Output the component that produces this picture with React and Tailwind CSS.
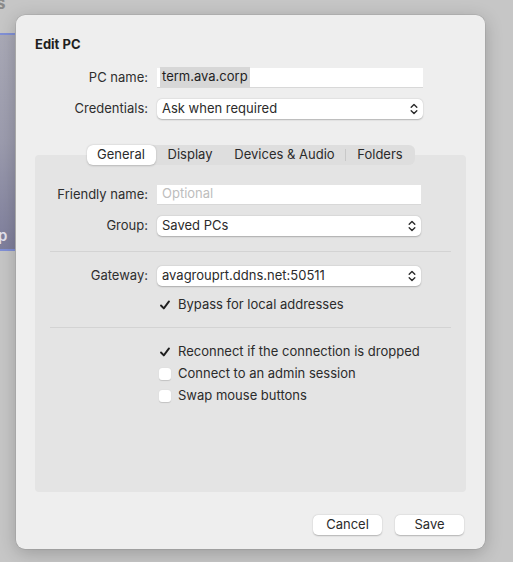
const font = { fontFamily: "Inter, 'Liberation Sans', sans-serif" };

const Chevrons = () => (
  <svg width="8" height="12" viewBox="0 0 8 12" fill="none" stroke="#2b2b2b" strokeWidth="1.4" strokeLinecap="round" strokeLinejoin="round">
    <path d="M1.2 4.2 L4 1.4 L6.8 4.2" />
    <path d="M1.2 7.8 L4 10.6 L6.8 7.8" />
  </svg>
);

const Check = () => (
  <svg width="12" height="12" viewBox="0 0 12 12" fill="none" stroke="#1f1f1f" strokeWidth="1.9" strokeLinecap="round" strokeLinejoin="round">
    <path d="M2 6.5 L4.8 9.4 L10 2.4" />
  </svg>
);

const Label = ({ children, w = "w-[113px]" }) => (
  <div className={`${w} shrink-0 text-right text-[13px] text-[#2e2e2e]`}>{children}</div>
);

const Select = ({ value, w }) => (
  <div className={`${w} h-[20px] bg-white rounded-[5px] shadow-[0_0.5px_1.5px_rgba(0,0,0,0.25)] flex items-center justify-between pl-[5px] pr-[5px] text-[13px] text-[#2b2b2b]`}>
    <span>{value}</span>
    <Chevrons />
  </div>
);

const CheckRow = ({ checked, label }) => (
  <div className="flex items-center gap-[7px] h-[22px]">
    <div className="w-[13px] h-[13px] flex items-center justify-center">
      {checked ? <Check /> : <div className="w-[12px] h-[12px] bg-white rounded-[3px] shadow-[0_0.5px_1px_rgba(0,0,0,0.15)]" />}
    </div>
    <span className="text-[13px] text-[#2b2b2b]">{label}</span>
  </div>
);

const tabs = ["General", "Display", "Devices & Audio", "Folders"];
const tabWidths = ["w-[69px]", "w-[69px]", "w-[120px]", "w-[69px]"];

export default function App() {
  return (
    <div style={font} className="relative w-[513px] h-[562px] overflow-hidden bg-[#c6c6c6]">
      {/* window behind the dialog */}
      <div className="absolute left-[-4px] top-[-9px] text-[17px] font-bold text-[#8a8a8a]">s</div>
      <div className="absolute left-0 top-[33px] w-[15px] h-[218px] border-y-2 border-[#8190d6] bg-gradient-to-b from-[#a9a9b6] via-[#9c9cae] to-[#7f7f9c]">
        <span className="absolute left-[-2px] top-[190px] text-[15px] font-semibold text-[#e4e4ee]">p</span>
      </div>

      <div className="relative ml-[16px] mt-[15px] w-[469px] h-[534px] bg-[#eeeeee] rounded-[9px] shadow-[0_4px_18px_rgba(0,0,0,0.22),0_0_0_0.5px_rgba(0,0,0,0.12)] flex flex-col">
        <div className="pl-[19px] pt-[20px] text-[13px] font-bold text-[#1f1f1f]">Edit PC</div>

        <div className="mt-[13px] pl-[19px] flex flex-col gap-[11px]">
          <div className="flex items-center gap-[9px]">
            <Label>PC name:</Label>
            <div className="w-[266px] h-[20px] bg-white border-b border-[#d8d8d8] flex items-center pl-[3px] text-[13px] text-[#1f1f1f]">
              <span className="bg-[#d7d7d7] px-[2px]">term.ava.corp</span>
            </div>
          </div>
          <div className="flex items-center gap-[9px]">
            <Label>Credentials:</Label>
            <Select value="Ask when required" w="w-[266px]" />
          </div>
        </div>

        {/* tab view */}
        <div className="mt-[26px] mx-[19px] flex flex-col">
          <div className="relative z-10 self-center -mb-[10px] h-[20px] flex items-center rounded-[6px] bg-[#dedede]">
            {tabs.map((t, i) => (
              <div key={t} className="flex items-center">
                {i === 3 && <div className="w-px h-[12px] bg-[#c8c8c8]" />}
                <div
                  className={`${tabWidths[i]} h-[20px] flex items-center justify-center text-[13px] text-[#2b2b2b] ${
                    i === 0 ? "bg-white rounded-[6px] shadow-[0_0.5px_2px_rgba(0,0,0,0.2)]" : ""
                  }`}
                >
                  {t}
                </div>
              </div>
            ))}
          </div>

          <div className="h-[337px] bg-[#e4e4e4] rounded-[4px] pt-[30px] flex flex-col">
            <div className="flex flex-col gap-[11px]">
              <div className="flex items-center gap-[9px]">
                <Label>Friendly name:</Label>
                <div className="w-[264px] h-[20px] bg-white border-b border-[#d8d8d8] flex items-center pl-[5px] text-[13px] text-[#bdbdbd]">
                  Optional
                </div>
              </div>
              <div className="flex items-center gap-[9px]">
                <Label>Group:</Label>
                <Select value="Saved PCs" w="w-[264px]" />
              </div>
            </div>

            <div className="mt-[15px] mx-[15px] h-px bg-[#d3d3d3]" />

            <div className="mt-[14px] flex items-center gap-[9px]">
              <Label>Gateway:</Label>
              <Select value="avagrouprt.ddns.net:50511" w="w-[264px]" />
            </div>
            <div className="mt-[8px] pl-[123px]">
              <CheckRow checked label="Bypass for local addresses" />
            </div>

            <div className="mt-[11px] mx-[15px] h-px bg-[#d3d3d3]" />

            <div className="mt-[13px] pl-[123px] flex flex-col">
              <CheckRow checked label="Reconnect if the connection is dropped" />
              <CheckRow label="Connect to an admin session" />
              <CheckRow label="Swap mouse buttons" />
            </div>
          </div>
        </div>

        <div className="mt-auto mb-[14px] mr-[21px] flex justify-end gap-[13px]">
          <button className="w-[69px] h-[20px] bg-white rounded-[5px] shadow-[0_0.5px_1.5px_rgba(0,0,0,0.25)] text-[13px] text-[#2b2b2b]">
            Cancel
          </button>
          <button className="w-[69px] h-[20px] bg-white rounded-[5px] shadow-[0_0.5px_1.5px_rgba(0,0,0,0.25)] text-[13px] text-[#2b2b2b]">
            Save
          </button>
        </div>
      </div>
    </div>
  );
}
